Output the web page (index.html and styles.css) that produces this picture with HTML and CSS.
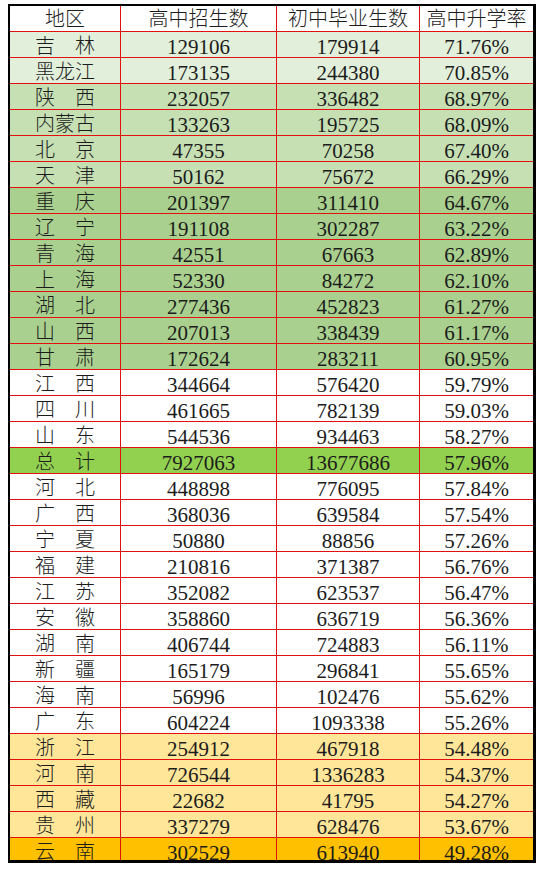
FILE: index.html
```html
<!DOCTYPE html>
<html lang="zh-CN">
<head>
<meta charset="utf-8">
<title>高中升学率</title>
<link rel="stylesheet" href="styles.css">
</head>
<body>
<div class="sheet">
  <div class="row head"><div class="c">地区</div><div class="c">高中招生数</div><div class="c">初中毕业生数</div><div class="c">高中升学率</div></div>
  <div class="row g1"><div class="c name"><span>吉林</span></div><div class="c">129106</div><div class="c">179914</div><div class="c">71.76%</div></div>
  <div class="row g1"><div class="c name"><span>黑龙江</span></div><div class="c">173135</div><div class="c">244380</div><div class="c">70.85%</div></div>
  <div class="row g2"><div class="c name"><span>陕西</span></div><div class="c">232057</div><div class="c">336482</div><div class="c">68.97%</div></div>
  <div class="row g2"><div class="c name"><span>内蒙古</span></div><div class="c">133263</div><div class="c">195725</div><div class="c">68.09%</div></div>
  <div class="row g2"><div class="c name"><span>北京</span></div><div class="c">47355</div><div class="c">70258</div><div class="c">67.40%</div></div>
  <div class="row g2"><div class="c name"><span>天津</span></div><div class="c">50162</div><div class="c">75672</div><div class="c">66.29%</div></div>
  <div class="row g3"><div class="c name"><span>重庆</span></div><div class="c">201397</div><div class="c">311410</div><div class="c">64.67%</div></div>
  <div class="row g3"><div class="c name"><span>辽宁</span></div><div class="c">191108</div><div class="c">302287</div><div class="c">63.22%</div></div>
  <div class="row g3"><div class="c name"><span>青海</span></div><div class="c">42551</div><div class="c">67663</div><div class="c">62.89%</div></div>
  <div class="row g3"><div class="c name"><span>上海</span></div><div class="c">52330</div><div class="c">84272</div><div class="c">62.10%</div></div>
  <div class="row g3"><div class="c name"><span>湖北</span></div><div class="c">277436</div><div class="c">452823</div><div class="c">61.27%</div></div>
  <div class="row g3"><div class="c name"><span>山西</span></div><div class="c">207013</div><div class="c">338439</div><div class="c">61.17%</div></div>
  <div class="row g3"><div class="c name"><span>甘肃</span></div><div class="c">172624</div><div class="c">283211</div><div class="c">60.95%</div></div>
  <div class="row"><div class="c name"><span>江西</span></div><div class="c">344664</div><div class="c">576420</div><div class="c">59.79%</div></div>
  <div class="row"><div class="c name"><span>四川</span></div><div class="c">461665</div><div class="c">782139</div><div class="c">59.03%</div></div>
  <div class="row"><div class="c name"><span>山东</span></div><div class="c">544536</div><div class="c">934463</div><div class="c">58.27%</div></div>
  <div class="row total"><div class="c name"><span>总计</span></div><div class="c">7927063</div><div class="c">13677686</div><div class="c">57.96%</div></div>
  <div class="row"><div class="c name"><span>河北</span></div><div class="c">448898</div><div class="c">776095</div><div class="c">57.84%</div></div>
  <div class="row"><div class="c name"><span>广西</span></div><div class="c">368036</div><div class="c">639584</div><div class="c">57.54%</div></div>
  <div class="row"><div class="c name"><span>宁夏</span></div><div class="c">50880</div><div class="c">88856</div><div class="c">57.26%</div></div>
  <div class="row"><div class="c name"><span>福建</span></div><div class="c">210816</div><div class="c">371387</div><div class="c">56.76%</div></div>
  <div class="row"><div class="c name"><span>江苏</span></div><div class="c">352082</div><div class="c">623537</div><div class="c">56.47%</div></div>
  <div class="row"><div class="c name"><span>安徽</span></div><div class="c">358860</div><div class="c">636719</div><div class="c">56.36%</div></div>
  <div class="row"><div class="c name"><span>湖南</span></div><div class="c">406744</div><div class="c">724883</div><div class="c">56.11%</div></div>
  <div class="row"><div class="c name"><span>新疆</span></div><div class="c">165179</div><div class="c">296841</div><div class="c">55.65%</div></div>
  <div class="row"><div class="c name"><span>海南</span></div><div class="c">56996</div><div class="c">102476</div><div class="c">55.62%</div></div>
  <div class="row"><div class="c name"><span>广东</span></div><div class="c">604224</div><div class="c">1093338</div><div class="c">55.26%</div></div>
  <div class="row y1"><div class="c name"><span>浙江</span></div><div class="c">254912</div><div class="c">467918</div><div class="c">54.48%</div></div>
  <div class="row y1"><div class="c name"><span>河南</span></div><div class="c">726544</div><div class="c">1336283</div><div class="c">54.37%</div></div>
  <div class="row y1"><div class="c name"><span>西藏</span></div><div class="c">22682</div><div class="c">41795</div><div class="c">54.27%</div></div>
  <div class="row y1"><div class="c name"><span>贵州</span></div><div class="c">337279</div><div class="c">628476</div><div class="c">53.67%</div></div>
  <div class="row y2 last"><div class="c name"><span>云南</span></div><div class="c">302529</div><div class="c">613940</div><div class="c">49.28%</div></div>
</div>
</body>
</html>
```

FILE: styles.css
```css
html, body {
  background: #ffffff;
}
body {
  margin: 4px 0 0 8px;
  font-family: "Liberation Serif", "Noto Sans CJK SC", serif;
  color: #1c1c1c;
}
.sheet {
  display: flex;
  flex-direction: column;
  gap: 1px;
  width: fit-content;
  background: #e31010;
  border-style: solid;
  border-color: #000000;
  border-width: 2px 3px 3px 2px;
}
.row {
  --bg: #ffffff;
  display: grid;
  grid-template-columns: 110px 155px 142px 113px;
  gap: 1px;
  height: 25px;
}
.row.last {
  height: 22px;
  overflow: hidden;
}
.c {
  background: var(--bg);
  display: flex;
  justify-content: center;
  align-items: flex-start;
  font-size: 21px;
  line-height: 19px;
  padding-top: 6px;
  white-space: nowrap;
}
.head .c {
  font-family: "Noto Sans CJK SC", sans-serif;
  font-size: 20px;
  padding-top: 2px;
  font-weight: 300;
}
.c.name {
  font-family: "Noto Sans CJK SC", sans-serif;
  font-size: 20px;
  font-weight: 300;
  padding-top: 3px;
}
.name span {
  display: block;
  width: 60px;
  text-align: justify;
  text-align-last: justify;
}
.g1 { --bg: #e2efda; }
.g2 { --bg: #c6e0b4; }
.g3 { --bg: #a9d08e; }
.total { --bg: #92d050; }
.y1 { --bg: #ffe699; }
.y2 { --bg: #ffc000; }
```
